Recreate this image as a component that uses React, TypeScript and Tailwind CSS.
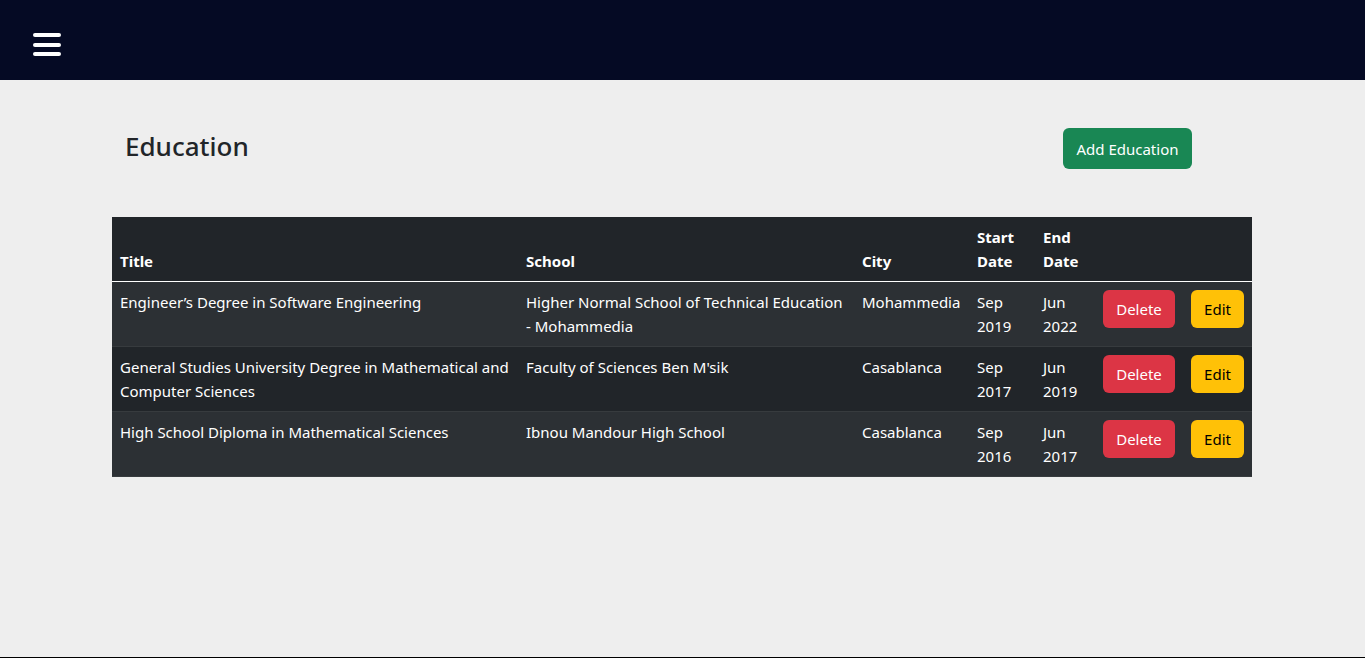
const rows = [
  {
    title: "Engineer’s Degree in Software Engineering",
    school: "Higher Normal School of Technical Education - Mohammedia",
    city: "Mohammedia",
    start: ["Sep", "2019"],
    end: ["Jun", "2022"],
  },
  {
    title: "General Studies University Degree in Mathematical and Computer Sciences",
    school: "Faculty of Sciences Ben M'sik",
    city: "Casablanca",
    start: ["Sep", "2017"],
    end: ["Jun", "2019"],
  },
  {
    title: "High School Diploma in Mathematical Sciences",
    school: "Ibnou Mandour High School",
    city: "Casablanca",
    start: ["Sep", "2016"],
    end: ["Jun", "2017"],
  },
];

export default function App() {
  return (
    <div className="flex h-[658px] flex-col bg-[#eeeeee] font-['Noto_Sans','Open_Sans',sans-serif] text-[15px] leading-6 text-[#212529]">
      <header className="flex h-20 shrink-0 items-start bg-[#050a24] px-[33px] pt-[33px]">
        <button className="flex w-7 flex-col gap-[5.5px]">
          <span className="h-1 w-7 rounded-sm bg-white" />
          <span className="h-1 w-7 rounded-sm bg-white" />
          <span className="h-1 w-7 rounded-sm bg-white" />
        </button>
      </header>

      <main className="flex-1">
        <div className="ml-[112px] w-[1140px] pt-12">
          <div className="flex items-center justify-between pl-[13px] pr-[60px]">
            <h3 className="-mt-1 text-[26px] font-medium leading-[1.2]">Education</h3>
            <button className="h-[41px] w-[129px] rounded-md bg-[#198754] text-white">
              Add Education
            </button>
          </div>

          <table className="mt-12 w-full table-fixed border-collapse text-left text-white">
            <thead className="bg-[#212529]">
              <tr className="border-b border-white">
                <th className="w-[406px] p-2 align-bottom font-bold">Title</th>
                <th className="w-[336px] p-2 align-bottom font-bold">School</th>
                <th className="w-[115px] p-2 align-bottom font-bold">City</th>
                <th className="w-[66px] p-2 align-bottom font-bold">Start Date</th>
                <th className="w-[60px] p-2 align-bottom font-bold">End Date</th>
                <th className="w-[88px] p-2" />
                <th className="w-[69px] p-2" />
              </tr>
            </thead>
            <tbody>
              {rows.map((r, i) => (
                <tr
                  key={r.title}
                  className={`border-b border-[#373b3e] ${i % 2 === 0 ? "bg-[#2c3034]" : "bg-[#212529]"}`}
                >
                  <td className="p-2 align-top">{r.title}</td>
                  <td className="p-2 align-top">{r.school}</td>
                  <td className="p-2 align-top">{r.city}</td>
                  <td className="p-2 align-top">
                    {r.start[0]}
                    <br />
                    {r.start[1]}
                  </td>
                  <td className="p-2 align-top">
                    {r.end[0]}
                    <br />
                    {r.end[1]}
                  </td>
                  <td className="p-2 align-top">
                    <button className="h-[38px] w-[72px] rounded-md bg-[#dc3545] text-white">Delete</button>
                  </td>
                  <td className="p-2 align-top">
                    <button className="h-[38px] w-[53px] rounded-md bg-[#ffc107] text-black">Edit</button>
                  </td>
                </tr>
              ))}
            </tbody>
          </table>
        </div>
      </main>
      <div className="h-px shrink-0 bg-black" />
    </div>
  );
}
